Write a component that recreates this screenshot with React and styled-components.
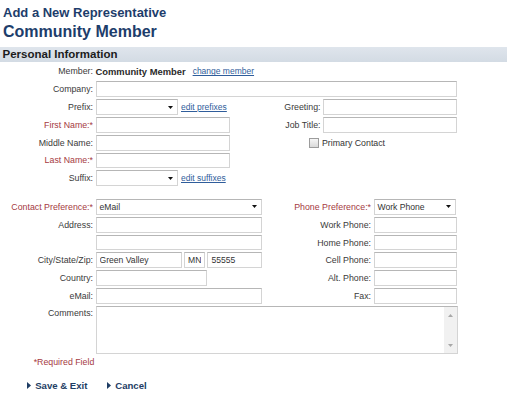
import React from "react";
import styled, { createGlobalStyle } from "styled-components";

const Global = createGlobalStyle`
  body { margin: 0; background: #fff; font-family: "Liberation Sans", Arial, sans-serif; }
`;

const Page = styled.div`
  width: 514px;
`;

const TitleBlock = styled.header`
  padding: 6px 0 0 3px;
  color: #1d3d6b;
`;

const Title1 = styled.h1`
  margin: 0;
  font-size: 13px;
  line-height: 14px;
  font-weight: bold;
`;

const Title2 = styled.h2`
  margin: 1.75px 0 0;
  font-size: 16px;
  line-height: 20px;
  font-weight: bold;
`;

const SectionBar = styled.div`
  margin-top: 5px;
  width: 507px;
  height: 15px;
  line-height: 15px;
  box-sizing: border-box;
  padding-left: 2.5px;
  background: linear-gradient(#dfe5ec, #d3dbe4);
  font-size: 11.5px;
  font-weight: bold;
  color: #1c1c1c;
`;

const FormGrid = styled.div`
  display: grid;
  grid-template-columns: ${(p) => p.$cols};
  grid-template-rows: ${(p) => p.$rows};
  row-gap: 2px;
  column-gap: 2.5px;
  margin-top: ${(p) => p.$mt};
  font-size: 8.5px;
  color: #3a3a3a;
`;

const Label = styled.label`
  grid-column: ${(p) => p.$col || 1};
  align-self: ${(p) => (p.$top ? "start" : "center")};
  padding-top: ${(p) => (p.$top ? "2px" : "0")};
  text-align: right;
  white-space: nowrap;
  font-size: 8.8px;
  color: ${(p) => (p.$req ? "#a53a3f" : "#3a3a3a")};
`;

const Cell = styled.div`
  grid-column: ${(p) => p.$col};
  justify-content: ${(p) => (p.$end ? "flex-end" : "flex-start")};
  display: flex;
  align-items: center;
  gap: ${(p) => p.$gap || "2px"};
  min-width: 0;
`;

const Input = styled.input`
  box-sizing: border-box;
  width: ${(p) => p.$w}px;
  height: 15.8px;
  margin: 0;
  padding: 0 3px;
  border: 1px solid #d4d4d4;
  border-top-color: #b6b6b6;
  background: #fff;
  font: 8.6px "Liberation Sans", Arial, sans-serif;
  color: #333;
  outline: none;
`;

const SelectBox = styled.div`
  box-sizing: border-box;
  width: ${(p) => p.$w}px;
  height: 15.8px;
  display: flex;
  align-items: center;
  padding: 0 4px 0 3px;
  border: 1px solid #d4d4d4;
  border-top-color: #b6b6b6;
  background: #fff;
  font-size: 8.6px;
  color: #333;
`;

const SelectText = styled.span`
  flex: 1;
`;

const Link = styled.a`
  color: #2f5d9b;
  text-decoration: underline;
  font-size: 8.5px;
  margin-left: ${(p) => p.$ml || "0"};
  white-space: nowrap;
`;

const MemberName = styled.span`
  font-size: 9.4px;
  font-weight: bold;
  color: #2a2a2a;
`;

const Check = styled.span`
  box-sizing: border-box;
  width: 10px;
  height: 10px;
  margin-right: 1.5px;
  border: 1px solid #9c9c9c;
  background: linear-gradient(#f6f6f6, #dadada);
`;

const CheckText = styled.span`
  margin-left: -1px;
  font-size: 8.8px;
  color: #333;
`;

const CommentBox = styled.div`
  grid-column: 2 / 5;
  display: flex;
  box-sizing: border-box;
  border: 1px solid #d4d4d4;
  border-top-color: #b6b6b6;
  background: #fff;
`;

const TextArea = styled.textarea`
  flex: 1;
  border: 0;
  margin: 0;
  padding: 2px 3px;
  resize: none;
  outline: none;
  font: 8.5px "Liberation Sans", Arial, sans-serif;
`;

const ScrollBar = styled.div`
  width: 13px;
  background: #f1f1f1;
  display: flex;
  flex-direction: column;
  justify-content: space-between;
  align-items: center;
  padding: 7px 0 6px;
  box-sizing: border-box;
`;

const RequiredNote = styled.div`
  width: 94.3px;
  margin-top: 2.8px;
  text-align: right;
  font-size: 8.8px;
  color: #a53a3f;
`;

const ButtonBar = styled.div`
  display: flex;
  gap: 19.3px;
  padding-left: 26.7px;
  margin-top: 13.2px;
`;

const ActionButton = styled.button`
  display: flex;
  align-items: center;
  gap: 4.5px;
  padding: 0;
  border: 0;
  background: none;
  font: bold 9.6px "Liberation Sans", Arial, sans-serif;
  color: #1e3d64;
  cursor: pointer;
`;

const Arrow = () => (
  <svg width="5" height="3" viewBox="0 0 5 3">
    <path d="M0 0H5L2.5 3Z" fill="#111" />
  </svg>
);

const Tri = () => (
  <svg width="4" height="7" viewBox="0 0 4 7">
    <path d="M0 0L4 3.5L0 7Z" fill="#1e3d64" />
  </svg>
);

const ScrollArrow = ({ up }) => (
  <svg width="5" height="3" viewBox="0 0 5 3">
    <path d={up ? "M0 3H5L2.5 0Z" : "M0 0H5L2.5 3Z"} fill="#a8a8a8" />
  </svg>
);

const Select = ({ w, value }) => (
  <SelectBox $w={w}>
    <SelectText>{value}</SelectText>
    <Arrow />
  </SelectBox>
);

export default function App() {
  return (
    <Page>
      <Global />
      <TitleBlock>
        <Title1>Add a New Representative</Title1>
        <Title2>Community Member</Title2>
      </TitleBlock>
      <SectionBar>Personal Information</SectionBar>

      <FormGrid $cols="93px 134px 88.5px 134px" $rows="repeat(7, 15.8px)" $mt="1.85px">
        <Label>Member:</Label>
        <Cell $col="2 / 5">
          <MemberName>Community Member</MemberName>
          <Link href="#" $ml="5px">change member</Link>
        </Cell>

        <Label>Company:</Label>
        <Cell $col="2 / 5">
          <Input $w={365} />
        </Cell>

        <Label>Prefix:</Label>
        <Cell $col="2">
          <Select w={82.5} value="" />
          <Link href="#" $ml="1px">edit prefixes</Link>
        </Cell>
        <Label $col={3}>Greeting:</Label>
        <Cell $col="4">
          <Input $w={134} />
        </Cell>

        <Label $req>First Name:*</Label>
        <Cell $col="2">
          <Input $w={134} />
        </Cell>
        <Label $col={3}>Job Title:</Label>
        <Cell $col="4">
          <Input $w={134} />
        </Cell>

        <Label>Middle Name:</Label>
        <Cell $col="2">
          <Input $w={134} />
        </Cell>
        <Cell $col="3" $end>
          <Check role="checkbox" aria-checked="false" />
        </Cell>
        <Cell $col="4">
          <CheckText>Primary Contact</CheckText>
        </Cell>

        <Label $req>Last Name:*</Label>
        <Cell $col="2">
          <Input $w={134} />
        </Cell>

        <Label>Suffix:</Label>
        <Cell $col="2">
          <Select w={82.5} value="" />
          <Link href="#" $ml="1px">edit suffixes</Link>
        </Cell>
      </FormGrid>

      <FormGrid $cols="93px 166.5px 106.5px 84px" $rows="repeat(6, 15.8px) 48px" $mt="12.9px">
        <Label $req>Contact Preference:*</Label>
        <Cell $col="2">
          <Select w={166.5} value="eMail" />
        </Cell>
        <Label $col={3} $req>Phone Preference:*</Label>
        <Cell $col="4">
          <Select w={82.5} value="Work Phone" />
        </Cell>

        <Label>Address:</Label>
        <Cell $col="2">
          <Input $w={166.5} />
        </Cell>
        <Label $col={3}>Work Phone:</Label>
        <Cell $col="4">
          <Input $w={83.5} />
        </Cell>

        <Label />
        <Cell $col="2">
          <Input $w={166.5} />
        </Cell>
        <Label $col={3}>Home Phone:</Label>
        <Cell $col="4">
          <Input $w={83.5} />
        </Cell>

        <Label>City/State/Zip:</Label>
        <Cell $col="2">
          <Input $w={86.6} defaultValue="Green Valley" />
          <Input $w={21.4} defaultValue="MN" />
          <Input $w={54.5} defaultValue="55555" />
        </Cell>
        <Label $col={3}>Cell Phone:</Label>
        <Cell $col="4">
          <Input $w={83.5} />
        </Cell>

        <Label>Country:</Label>
        <Cell $col="2">
          <Input $w={111} />
        </Cell>
        <Label $col={3}>Alt. Phone:</Label>
        <Cell $col="4">
          <Input $w={83.5} />
        </Cell>

        <Label>eMail:</Label>
        <Cell $col="2">
          <Input $w={166.5} />
        </Cell>
        <Label $col={3}>Fax:</Label>
        <Cell $col="4">
          <Input $w={83.5} />
        </Cell>

        <Label $top>Comments:</Label>
        <CommentBox>
          <TextArea />
          <ScrollBar>
            <ScrollArrow up />
            <ScrollArrow />
          </ScrollBar>
        </CommentBox>
      </FormGrid>

      <RequiredNote>*Required Field</RequiredNote>

      <ButtonBar>
        <ActionButton>
          <Tri />
          Save &amp; Exit
        </ActionButton>
        <ActionButton>
          <Tri />
          Cancel
        </ActionButton>
      </ButtonBar>
    </Page>
  );
}
